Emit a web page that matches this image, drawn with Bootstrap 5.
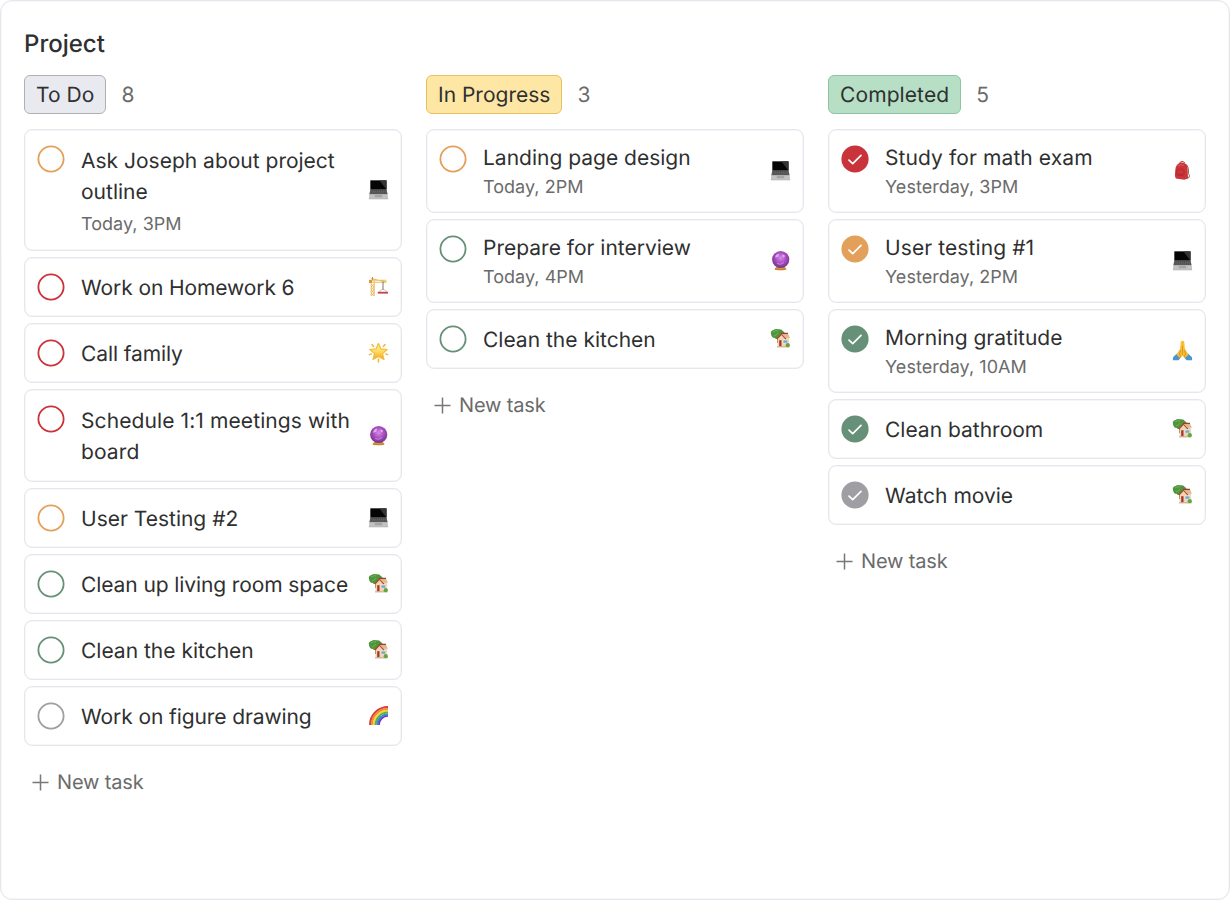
<!DOCTYPE html>
<html lang="en">
<head>
<meta charset="utf-8">
<meta name="viewport" content="width=device-width, initial-scale=1">
<title>Project</title>
<link href="https://cdn.jsdelivr.net/npm/bootstrap@5.3.0/dist/css/bootstrap.min.css" rel="stylesheet">
<style>
body{font-family:Inter,"Liberation Sans",sans-serif;color:#2f3030;background:#fff;text-rendering:geometricPrecision}
.board{height:900px;border:1px solid #e6e6ee;box-shadow:inset 0 0 0 .5px #eeeef4;border-radius:12px;padding:25px 23px 0;overflow:hidden}
.board-title{font-size:24px;line-height:36px;font-weight:500;letter-spacing:0;margin:0 0 13px}
.lanes{gap:24px}
.lane{width:378px;flex:none}
.lane-head{height:39px;gap:15px;margin-bottom:15px}
.tag{height:39px;line-height:39px;padding:0 11px;border:1px solid;border-radius:6px;font-size:21px;letter-spacing:.06px}
.tag-todo{background:#e9e9f0;border-color:#b0b0b4}
.tag-prog{background:#fee6a5;border-color:#e5c25b;letter-spacing:0}
.tag-done{background:#b6dfc5;border-color:#8fc3a3;letter-spacing:.1px}
.count{font-size:21px;color:#6b6b6b;padding-top:2px}
.task{border:1px solid #e6e6ee;box-shadow:inset 0 0 0 .5px #eeeef4;border-radius:8px;height:60px;margin-bottom:6px;padding:0 12px}
.task.two{height:93px}.task.timed{height:84px}.task.two.timed{height:122px}
.task.timed .txt{padding-top:1.6px}
.task.two.timed .when{margin-top:2px}
.task.two.timed .txt{padding-top:3.6px}
.task.two.timed .emo{margin-bottom:2px}
.ring{width:28px;height:28px;flex:none;margin-top:15px;align-self:flex-start;fill:none;stroke:currentColor}
.task:not(.timed) .ring{margin-top:14.6px}
.txt{font-size:21px;line-height:31.5px;letter-spacing:0;margin-left:16px;align-self:center;padding-top:3px}
.snug{letter-spacing:-.1px}.loose{letter-spacing:.1px}
.when{font-size:18px;line-height:27px;letter-spacing:.03px;color:#6b6b6b}
.emo{width:21px;height:21px;flex:none;align-self:center;margin-left:auto;margin-bottom:.6px}
.red{color:#c9343b}.orange{color:#e3a05a}.green{color:#669077}.gray{color:#9e9ea3}
.add{color:#6b6b6b;font-size:20px;line-height:30px;letter-spacing:-.15px;padding:15px 0 0 8px;gap:8px}
.add svg{width:17px;height:17px;stroke:#777;stroke-width:1.5}
</style>
</head>
<body>
<svg width="0" height="0" class="position-absolute" aria-hidden="true">
<defs>
<linearGradient id="gStar" x1="0" y1="0" x2="0" y2="1"><stop offset="0" stop-color="#fff3ad"/><stop offset=".5" stop-color="#fddc63"/><stop offset="1" stop-color="#f0a21c"/></linearGradient>
<radialGradient id="gOrb" cx=".5" cy=".4" r=".6"><stop offset="0" stop-color="#d48be8"/><stop offset=".55" stop-color="#a54bbd"/><stop offset="1" stop-color="#6c3389"/></radialGradient>
</defs>
<symbol id="open" viewBox="0 0 28 28"><circle cx="14" cy="14" r="12.6" stroke-width="1.8"/></symbol>
<symbol id="done" viewBox="0 0 28 28"><circle cx="14" cy="14" r="13.6" fill="currentColor" stroke="none"/><path d="M8 15.1 11.7 18.6 20 10.4" stroke="#fff" stroke-width="1.7" stroke-linecap="round" stroke-linejoin="round"/></symbol>
<symbol id="plus" viewBox="0 0 17 17"><path d="M8.5 .5v16M.5 8.5h16"/></symbol>
<symbol id="laptop" viewBox="0 0 21 21"><path d="M2.2 1.2h16.5v9.8H2.2z" fill="#8c8c8e"/><path d="M2.5 1.5h15.9v9H2.5z" fill="#050505"/><path d="M11.5 1.5h6.9v9z" fill="#343436"/><path d="M2.3 10.8h16.3l1 4.8H1.3z" fill="#4c4c4c"/><path d="M2.5 12.2h16M2 14h17" stroke="#888" stroke-width=".6" stroke-dasharray="1.4 .7"/><path d="M1.4 15.4h18.2l.6 4.6H.8z" fill="#c2c2c4"/><path d="M7 15.8h7l.3 2.5H6.7z" fill="#a4a4a4"/><path d="M.8 20h19.4" stroke="#aaa" stroke-width=".5"/></symbol>
<symbol id="crane" viewBox="0 0 21 21"><path d="M3.2 5v15M6.2 5v15M3.2 8l3 3-3 3 3 3-3 3M6.2 8l-3 3 3 3-3 3 3 3" stroke="#e9bc62" stroke-width="1" fill="none"/><path d="M1 4.3h17.5M3 2.5 18.5 6M1 6.2h17.5" stroke="#ebbd5d" stroke-width="1.1"/><path d="M1 4h3v3H1z" fill="#d59b3b"/><path d="M4.5 1v3" stroke="#b59452"/><path d="M15 5.8v8.2" stroke="#555" stroke-width=".8"/><path d="m15 13-4.5 3M15 13l4.5 3" stroke="#c58d87" stroke-width=".6"/><path d="M9.8 15.8H20v1.8H9.8z" fill="#bd4448"/></symbol>
<symbol id="star" viewBox="0 0 21 21"><path d="m10.5 1.5 2.5 5.4 6.2.6-4.7 4.1 1.5 6-5.5-3.1L5 17.6l1.5-6-4.7-4.1L8 6.9z" fill="url(#gStar)" stroke="#f6bb35" stroke-width="1.2" stroke-linejoin="round"/><path d="m4 2.5 1.6 2M17 2.5l-1.6 2M1.4 12.6l2-.7M19.6 12.6l-2-.7M10.5 17v3" stroke="#f1b53b" stroke-width="1.5" stroke-linecap="round"/></symbol>
<symbol id="orb" viewBox="0 0 21 21"><path d="M6 17h9l1.7 2.4q-6.2 1.9-12.4 0z" fill="#d8953e"/><path d="M5 19q5.5 1.3 11 0" stroke="#b5762f" stroke-width=".7" fill="none"/><circle cx="10.7" cy="9.5" r="8.6" fill="url(#gOrb)"/><path d="M5 7.5Q6 3.5 9 3.5l-.5 3-2 1zM12 4.5q3 0 3 2l-2 1z" fill="#edc4f5" opacity=".75"/><path d="M7 13.5q4 2 7-1" stroke="#cf83df" fill="none"/></symbol>
<symbol id="house" viewBox="0 0 21 21"><path d="M7 9h1.8v6H7z" fill="#835334"/><path d="M1 6Q0 2.8 3.5 2 5.5.2 8.2 1.3 12 .7 13 3.2q2.5 1 1.2 3.8L9 10Q6 12 4.8 10 1.5 10 1 6z" fill="#4e953b"/><path d="M3 4q3-2 5-1M4 8q3-1 4-3" stroke="#76b258" fill="none"/><path d="m7.5 10.5 4.3-4h6.5l.8 5v7.4H7.5z" fill="#f0d5ad"/><path d="m6.9 11 4.6-5 4.4 5" stroke="#b5423b" stroke-width="1.2" fill="none"/><path d="M11.2 5.4h6.6l2.2 4.4h-4.6z" fill="#dcbc92"/><path d="M11 5.4h7" stroke="#a83a34" stroke-width="1.3"/><path d="M9.2 12.2h2.3v6H9.2z" fill="#a83331"/><path d="M13 12h4.8v3.2H13z" fill="#70a9d5" stroke="#fff4dd" stroke-width=".6"/><path d="M7 18.9h12.5" stroke="#b59c7c" stroke-width=".8"/><circle cx="17.8" cy="17.2" r="2.1" fill="#66a441"/></symbol>
<symbol id="rainbow" viewBox="0 0 21 21" fill="none" stroke-width="2"><path d="M2 20C2 10 10 2 20 2" stroke="#d6413c"/><path d="M3.9 20C3.9 11 11 3.9 20 3.9" stroke="#f08a2c"/><path d="M5.8 20C5.8 12 12 5.8 20 5.8" stroke="#f8d43b"/><path d="M7.6 20C7.6 13 13 7.6 20 7.6" stroke="#5cb244"/><path d="M9.4 20C9.4 14 14 9.4 20 9.4" stroke="#358ad1"/><path d="M11 20C11 15 15 11 20 11" stroke="#6b36c9" stroke-width="1.7"/></symbol>
<symbol id="bag" viewBox="0 0 21 21"><path d="M14.5 4.5q2.6 3 2 9 1.6 2 .6 4l-2.6 1" fill="none" stroke="#8d6545" stroke-width="1"/><path d="M7.5 3.5q.5-2 2.6-2 2 0 2.8 1.8" fill="none" stroke="#b22f34" stroke-width="1"/><path d="M3.3 10Q3.8 3.2 9.6 2.6q5.4.2 6 5.4l.4 10.2-3.6 1.6-8.6-1.4q-1.2-2-.8-4.4z" fill="#cb3439"/><path d="M4.6 10.6q3.4-3 7-1l.6 4.2q-3.6 1.6-7.8.2zM5 15l6.8.8" fill="none" stroke="#a6272c" stroke-width=".6"/><path d="M6 5.8q3-2 6-.4" stroke="#de5c5f" fill="none"/></symbol>
<symbol id="pray" viewBox="0 0 21 21"><path d="m1 17.2 4-3.6 4 3.7-2.5 3H.8zM20 17.2l-4-3.6-4 3.7 2.5 3h5.7z" fill="#4b96d1"/><path d="M8.8 1.5q1.7-1.4 3.4 0l.7 7.5 3.7 5.6-4 4-2.1-3-2.1 3-4-4L8.1 9z" fill="#f8bf35"/><path d="M10.5 6v8.5M8.5 10l-1 4 1.2 3M12.5 10l1 4-1.2 3" stroke="#d58d21" stroke-width=".8" fill="none"/></symbol>
</svg>

<main class="board">
<h1 class="board-title">Project</h1>
<div class="lanes d-flex align-items-start">
<section class="lane">
  <div class="lane-head d-flex align-items-center"><span class="tag tag-todo">To Do</span><span class="count">8</span></div>
  <div class="task two timed d-flex"><svg class="ring orange"><use href="#open"/></svg><div class="txt">Ask Joseph about project<br>outline<div class="when">Today, 3PM</div></div><svg class="emo"><use href="#laptop"/></svg></div>
  <div class="task d-flex"><svg class="ring red"><use href="#open"/></svg><div class="txt snug">Work on Homework 6</div><svg class="emo"><use href="#crane"/></svg></div>
  <div class="task d-flex"><svg class="ring red"><use href="#open"/></svg><div class="txt snug">Call family</div><svg class="emo"><use href="#star"/></svg></div>
  <div class="task two d-flex"><svg class="ring red"><use href="#open"/></svg><div class="txt loose">Schedule 1:1 meetings with<br>board</div><svg class="emo"><use href="#orb"/></svg></div>
  <div class="task d-flex"><svg class="ring orange"><use href="#open"/></svg><div class="txt">User Testing #2</div><svg class="emo"><use href="#laptop"/></svg></div>
  <div class="task d-flex"><svg class="ring green"><use href="#open"/></svg><div class="txt snug">Clean up living room space</div><svg class="emo"><use href="#house"/></svg></div>
  <div class="task d-flex"><svg class="ring green"><use href="#open"/></svg><div class="txt">Clean the kitchen</div><svg class="emo"><use href="#house"/></svg></div>
  <div class="task d-flex"><svg class="ring gray"><use href="#open"/></svg><div class="txt snug">Work on figure drawing</div><svg class="emo"><use href="#rainbow"/></svg></div>
  <div class="add d-flex align-items-center"><svg><use href="#plus"/></svg>New task</div>
</section>
<section class="lane">
  <div class="lane-head d-flex align-items-center"><span class="tag tag-prog">In Progress</span><span class="count">3</span></div>
  <div class="task timed d-flex"><svg class="ring orange"><use href="#open"/></svg><div class="txt">Landing page design<div class="when">Today, 2PM</div></div><svg class="emo"><use href="#laptop"/></svg></div>
  <div class="task timed d-flex"><svg class="ring green"><use href="#open"/></svg><div class="txt">Prepare for interview<div class="when">Today, 4PM</div></div><svg class="emo"><use href="#orb"/></svg></div>
  <div class="task d-flex"><svg class="ring green"><use href="#open"/></svg><div class="txt">Clean the kitchen</div><svg class="emo"><use href="#house"/></svg></div>
  <div class="add d-flex align-items-center"><svg><use href="#plus"/></svg>New task</div>
</section>
<section class="lane">
  <div class="lane-head d-flex align-items-center"><span class="tag tag-done">Completed</span><span class="count">5</span></div>
  <div class="task timed d-flex"><svg class="ring red"><use href="#done"/></svg><div class="txt loose">Study for math exam<div class="when">Yesterday, 3PM</div></div><svg class="emo"><use href="#bag"/></svg></div>
  <div class="task timed d-flex"><svg class="ring orange"><use href="#done"/></svg><div class="txt loose">User testing #1<div class="when">Yesterday, 2PM</div></div><svg class="emo"><use href="#laptop"/></svg></div>
  <div class="task timed d-flex"><svg class="ring green"><use href="#done"/></svg><div class="txt">Morning gratitude<div class="when">Yesterday, 10AM</div></div><svg class="emo"><use href="#pray"/></svg></div>
  <div class="task d-flex"><svg class="ring green"><use href="#done"/></svg><div class="txt">Clean bathroom</div><svg class="emo"><use href="#house"/></svg></div>
  <div class="task d-flex"><svg class="ring gray"><use href="#done"/></svg><div class="txt">Watch movie</div><svg class="emo"><use href="#house"/></svg></div>
  <div class="add d-flex align-items-center"><svg><use href="#plus"/></svg>New task</div>
</section>
</div>
</main>
<script src="https://cdn.jsdelivr.net/npm/bootstrap@5.3.0/dist/js/bootstrap.bundle.min.js"></script>
</body>
</html>
